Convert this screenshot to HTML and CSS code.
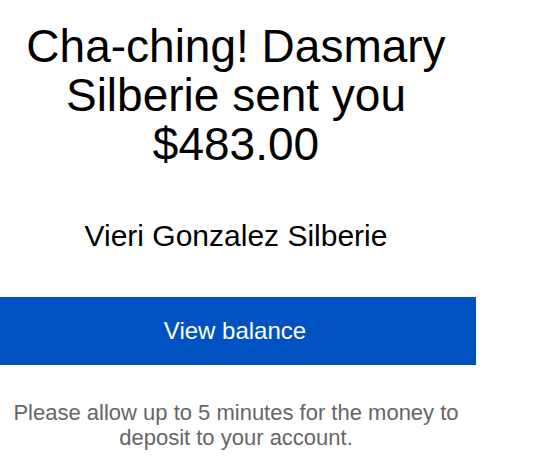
FILE: index.html
```html
<!DOCTYPE html>
<html>
<head>
<meta charset="utf-8">
<link rel="stylesheet" href="styles.css">
</head>
<body>
<div class="card">
  <h1 class="title">Cha-ching! Dasmary Silberie sent you $483.00</h1>
  <p class="sender">Vieri Gonzalez Silberie</p>
  <a class="btn" href="#">View balance</a>
  <p class="note">Please allow up to 5 minutes for the money to deposit to your account.</p>
</div>
</body>
</html>
```
FILE: styles.css
```css
html, body {
  margin: 0;
  padding: 0;
  background: #fff;
}
body {
  font-family: "Liberation Sans", Arial, sans-serif;
}
.card {
  width: 476px;
  display: flex;
  flex-direction: column;
  align-items: stretch;
  text-align: center;
}
.title {
  margin: 0;
  padding: 22px 4px 0 0;
  font-size: 46px;
  line-height: 49px;
  font-weight: normal;
  color: #000;
}
.sender {
  margin: 50px 4px 0 0;
  font-size: 30px;
  line-height: 34px;
  color: #000;
}
.btn {
  margin-top: 44px;
  height: 68px;
  padding-right: 6px;
  display: flex;
  align-items: center;
  justify-content: center;
  background: #0052c2;
  color: #fff;
  font-size: 24px;
  text-decoration: none;
}
.note {
  margin: 35px 4px 0 0;
  font-size: 22px;
  line-height: 25px;
  color: #666;
}
```
